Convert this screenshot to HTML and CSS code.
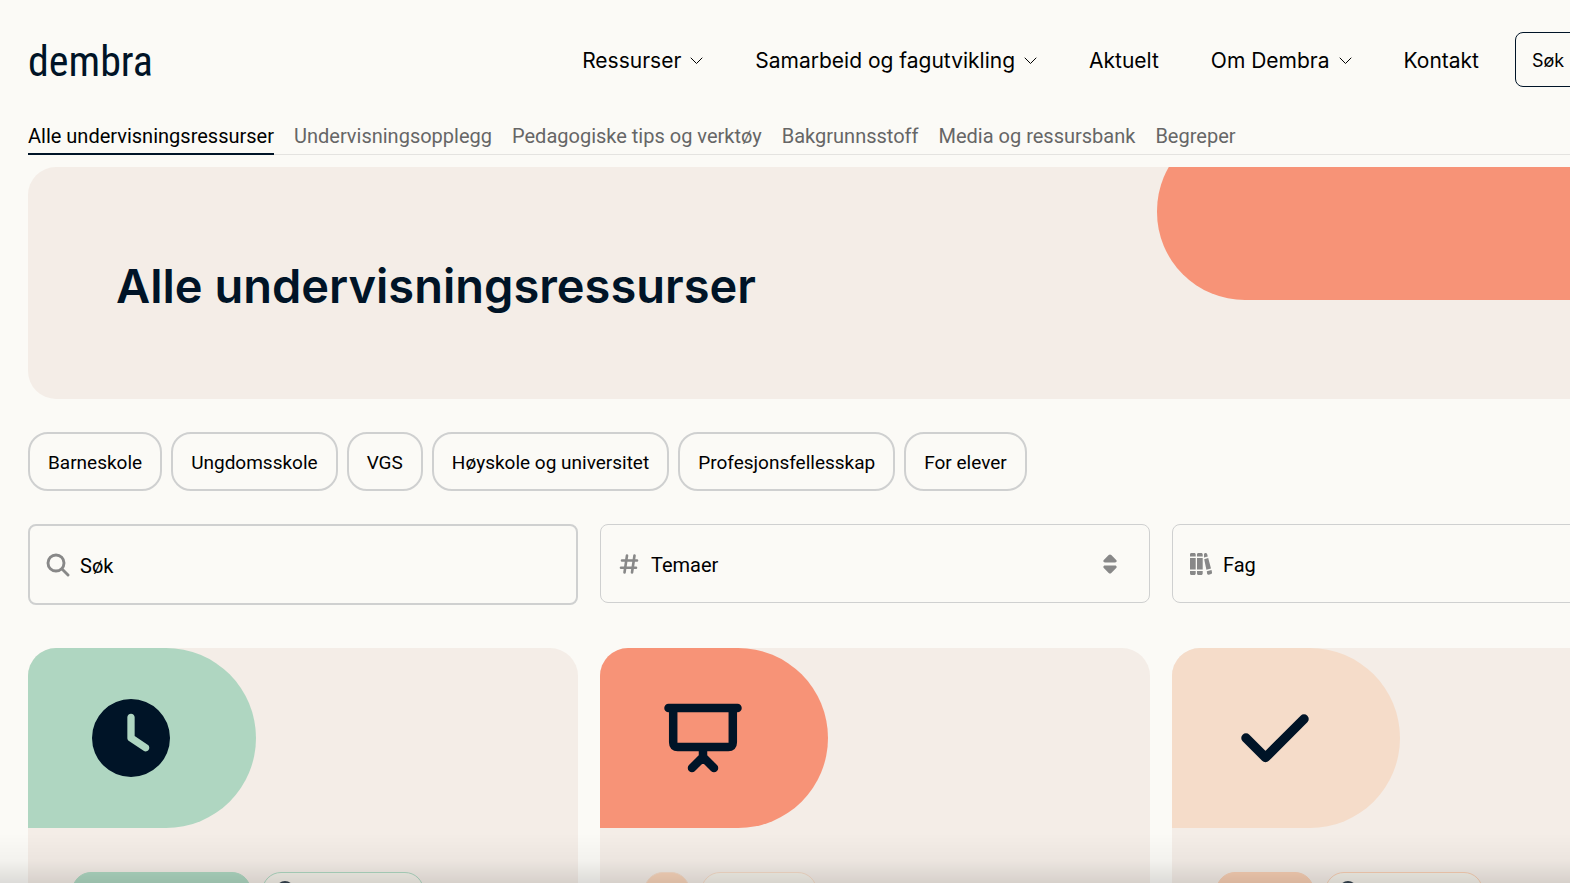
FILE: index.html
```
<!DOCTYPE html>
<html lang="no">
<head>
<meta charset="utf-8">
<title>Alle undervisningsressurser – Dembra</title>
<link rel="stylesheet" href="styles.css">
</head>
<body>
<svg class="sprite" aria-hidden="true">
  <symbol id="chevron" viewBox="0 0 13 8"><path d="M1 1 6.500 6.500 12 1" fill="none" stroke="currentColor" stroke-width="1" stroke-linecap="round" stroke-linejoin="round"/></symbol>
  <symbol id="clock" viewBox="0 0 512 512"><path fill="currentColor" d="M256 0a256 256 0 1 1 0 512A256 256 0 1 1 256 0zM232 120V256c0 8 4 15.500 10.700 20l96 64c11 7.400 25.900 4.400 33.300-6.700s4.400-25.900-6.700-33.300L280 243.200V120c0-13.300-10.700-24-24-24s-24 10.700-24 24z"/></symbol>
</svg>
<div class="page">
  <header class="header">
    <a class="logo" href="#">dembra</a>
    <nav class="menu" aria-label="Hovedmeny">
      <a href="#">Ressurser <svg class="chevron"><use href="#chevron"/></svg></a>
      <a href="#">Samarbeid og fagutvikling <svg class="chevron"><use href="#chevron"/></svg></a>
      <a href="#">Aktuelt</a>
      <a href="#">Om Dembra <svg class="chevron"><use href="#chevron"/></svg></a>
      <a href="#">Kontakt</a>
    </nav>
    <input class="site-search" type="search" placeholder="Søk" aria-label="Søk">
  </header>
  <nav class="tabs" aria-label="Ressurser">
    <a class="active" href="#">Alle undervisningsressurser</a>
    <a href="#">Undervisningsopplegg</a>
    <a href="#">Pedagogiske tips og verktøy</a>
    <a href="#">Bakgrunnsstoff</a>
    <a href="#">Media og ressursbank</a>
    <a href="#">Begreper</a>
  </nav>
  <main>
    <section class="hero"><h1>Alle undervisningsressurser</h1></section>
    <div class="chips">
      <button type="button">Barneskole</button>
      <button type="button">Ungdomsskole</button>
      <button type="button">VGS</button>
      <button type="button">Høyskole og universitet</button>
      <button type="button">Profesjonsfellesskap</button>
      <button type="button">For elever</button>
    </div>
    <form class="filters">
      <label class="field search">
        <svg class="icon" viewBox="0 0 24 24" fill="none" stroke="currentColor" stroke-width="2.900" stroke-linecap="round"><circle cx="10" cy="10" r="8"/><path d="m16 16 6 6"/></svg>
        <input type="search" placeholder="Søk" aria-label="Søk i ressurser">
      </label>
      <label class="field">
        <svg class="icon" viewBox="0 0 24 24" fill="none" stroke="currentColor" stroke-width="2.600" stroke-linecap="round"><path d="M10 3.500 7.500 20.500M17.500 3.500l-2.500 17M5 8.500h15M4 15.800h15"/></svg>
        <select aria-label="Temaer"><option>Temaer</option></select>
        <svg class="sort" viewBox="0 0 14 22" fill="currentColor"><path d="M2 9.500h10c1.600 0 2.200-1.500 1.200-2.600L8.300 2C7.500 1.200 6.500 1.200 5.700 2L.8 6.900C-.2 8 .4 9.500 2 9.500zM2 12.500h10c1.600 0 2.200 1.500 1.200 2.600L8.300 20c-.8.8-1.800.8-2.600 0L.8 15.100c-1-1.100-.4-2.600 1.200-2.600z"/></svg>
      </label>
      <label class="field">
        <svg class="icon" viewBox="0 0 24 24" fill="currentColor"><path d="M1 4.500V2.500C1 1.500 1.600 1 2.500 1h2.700C6 1 6.700 1.500 6.700 2.500v2zM1 6h5.700v11.500H1zM1 19h5.700v2.500c0 .9-.7 1.500-1.500 1.500H2.500C1.600 23 1 22.400 1 21.500zM8 4.500v-2C8 1.500 8.600 1 9.500 1h2.700c.8 0 1.500.5 1.500 1.500v2zM8 6h5.700v11.500H8zM8 19h5.700v2.500c0 .9-.7 1.500-1.500 1.500H9.500c-.9 0-1.500-.6-1.500-1.500zM15 5.500V2.500c0-.8.5-1.300 1.200-1.500 1-.2 1.700.2 2 1.200l.6 2.400zM15.200 7.200l4-1.100L22 16.600l-4.600 1.200zM17.800 19.300l4.700-1.200.5 2.200c.2.900-.2 1.600-1 1.800l-2.100.6c-.9.200-1.500-.2-1.800-1z"/></svg>
        <select aria-label="Fag"><option>Fag</option></select>
        <svg class="sort" viewBox="0 0 14 22" fill="currentColor"><path d="M1 9.500h12L7 1zM1 12.500h12L7 21z"/></svg>
      </label>
    </form>
    <section class="cards">
      <article class="card green">
        <div class="badge"><svg viewBox="0 0 512 512"><use href="#clock"/></svg></div>
        <div class="tags"><span class="tag filled"></span><span class="tag outline"><svg viewBox="0 0 512 512"><use href="#clock"/></svg></span></div>
      </article>
      <article class="card coral">
        <div class="badge"><svg viewBox="0 0 78 78" fill="none" stroke="currentColor" stroke-width="8.500" stroke-linecap="round"><path d="M4.500 9h69M9.200 9v34.500c0 3 1.500 4.500 4.500 4.500h50.600c3 0 4.500-1.500 4.500-4.500V9M39 50v8M28 69l11-11 11 11"/></svg></div>
        <div class="tags"><span class="tag filled"></span><span class="tag outline"></span></div>
      </article>
      <article class="card peach">
        <div class="badge"><svg viewBox="0 0 78 78" fill="none" stroke="currentColor" stroke-width="9.500" stroke-linecap="round" stroke-linejoin="round"><path d="m10 39 19.500 19.500L68 20"/></svg></div>
        <div class="tags"><span class="tag filled"></span><span class="tag outline"><svg viewBox="0 0 512 512"><use href="#clock"/></svg></span></div>
      </article>
    </section>
  </main>
</div>
<div class="bottom-shade"></div>
</body>
</html>
```
FILE: styles.css
```
* { box-sizing: border-box; }
html, body { height: 100%; }
body {
  margin: 0;
  overflow: hidden;
  background: #fbfaf6;
  color: #000;
  font-family: Inter, Roboto, sans-serif;
}
a { color: inherit; text-decoration: none; }
input, select, button { font: inherit; color: inherit; }
input::placeholder { color: #000; opacity: 1; }
.sprite { display: none; }
.page { min-width: 1750px; padding: 32px 28px 0; }

.header { display: flex; align-items: center; height: 55px; }
.logo {
  margin-right: auto;
  padding-top: 4px;
  color: #001427;
  font: 42px/56px "Liberation Sans Narrow", "Roboto Condensed", sans-serif;
}
.menu { display: flex; gap: 52px; padding-top: 2px; font-size: 21px; line-height: 32px; }
.menu a { display: flex; align-items: center; gap: 9px; white-space: nowrap; }
.chevron { width: 13px; height: 8px; }
.site-search {
  width: 207px;
  height: 55px;
  margin-left: 36px;
  padding: 2px 16px 0;
  border: 1px solid #001427;
  border-radius: 8px;
  background: none;
  font-size: 18px;
}

.tabs {
  display: flex;
  gap: 20px;
  margin-top: 32px;
  border-bottom: 1px solid #e4e3e0;
  color: #666;
  font-family: Roboto, sans-serif;
  font-size: 20px;
  line-height: 34px;
}
.tabs a { margin-bottom: -1px; border-bottom: 2px solid transparent; }
.tabs .active { color: #000; border-color: #001427; }

.hero {
  position: relative;
  overflow: hidden;
  display: flex;
  align-items: center;
  height: 232px;
  margin-top: 12px;
  padding: 6px 88px 0;
  border-radius: 28px;
  background: #f4ede7;
}
.hero::after {
  content: "";
  position: absolute;
  top: -44px;
  right: 0;
  width: 565px;
  height: 177px;
  border-radius: 88px 0 0 88px;
  background: #f79377;
}
h1 { margin: 0; color: #001427; font-size: 47px; line-height: 60px; font-weight: 600; }

.chips { display: flex; gap: 9px; margin-top: 33px; }
.chips button {
  height: 59px;
  padding: 2px 18px 0;
  border: 2px solid #cfd0d0;
  border-radius: 20px;
  background: none;
  font-family: Roboto, sans-serif;
  font-size: 19px;
}

.filters, .cards { display: grid; grid-template-columns: repeat(3, 1fr); column-gap: 22px; }
.filters { align-items: start; margin-top: 33px; font-family: Roboto, sans-serif; font-size: 20px; }
.field {
  display: flex;
  align-items: center;
  gap: 10px;
  height: 79px;
  padding: 0 32px 0 16px;
  border: 1px solid #cfd0d0;
  border-radius: 8px;
}
.field.search { height: 81px; border-width: 2px; }
.field input, .field select {
  flex: 1;
  min-width: 0;
  padding: 3px 0 0;
  border: 0;
  outline: 0;
  background: none;
  appearance: none;
}
.icon { width: 24px; height: 24px; color: #888; }
.sort { width: 14px; height: 22px; color: #888; }

.cards { margin-top: 43px; }
.card { height: 560px; border-radius: 28px; overflow: hidden; background: #f4ede7; }
.badge {
  display: flex;
  align-items: center;
  width: 228px;
  height: 180px;
  padding-left: 64px;
  border-radius: 0 90px 90px 0;
  background: var(--tone);
  color: #001427;
}
.badge svg { width: 78px; height: 78px; }
.green { --tone: #afd6c1; --tag: #afd8c2; --first: 179px; --second: 162px; }
.coral { --tone: #f79377; --tag: #f6dcc8; --first: 46px; --second: 116px; }
.peach { --tone: #f5dcc9; --tag: #f8cfb4; --first: 98px; --second: 158px; }
.coral .filled { background: #f9d5bb; }
.tags { display: flex; gap: 11px; padding: 44px 44px 0; }
.tag { height: 38px; border: 1px solid var(--tag); border-radius: 19px; }
.filled { width: var(--first); background: var(--tag); }
.outline { width: var(--second); padding: 8px 13px; background: #f5f2ea; color: #35424f; }
.outline svg { display: block; width: 18px; height: 18px; }

.bottom-shade {
  position: fixed;
  inset: auto 0 0;
  height: 50px;
  background: linear-gradient(rgba(0, 0, 0, 0), rgba(0, 0, 0, .03) 55%, rgba(0, 0, 0, .12));
  pointer-events: none;
}
```
